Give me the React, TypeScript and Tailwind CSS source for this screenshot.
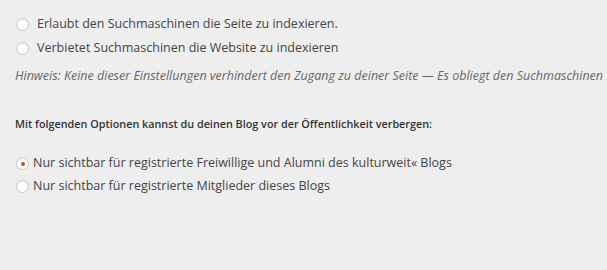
export default function App() {
    return (
        <div className="h-[270px] w-[607px] overflow-hidden bg-[#eeeeee] font-['Open_Sans',sans-serif] text-[#444]">
            <div className="flex flex-col pl-[16px] pt-[12px]">
                {/* Suchmaschinen */}
                <label className="flex h-[24px] items-center gap-[8px] whitespace-nowrap text-[12.5px]">
                    <span className="h-[13px] w-[13px] shrink-0 rounded-full border border-[#c8c8c8] bg-white shadow-[inset_0_1px_2px_rgba(0,0,0,0.08)]" />
                    Erlaubt den Suchmaschinen die Seite zu indexieren.
                </label>
                <label className="flex h-[24px] items-center gap-[8px] whitespace-nowrap text-[12.5px]">
                    <span className="h-[13px] w-[13px] shrink-0 rounded-full border border-[#c8c8c8] bg-white shadow-[inset_0_1px_2px_rgba(0,0,0,0.08)]" />
                    Verbietet Suchmaschinen die Website zu indexieren
                </label>
                <p className="mt-[7px] -ml-[1px] whitespace-nowrap text-[12.5px] leading-[17px] italic text-[#666]">
                    Hinweis: Keine dieser Einstellungen verhindert den Zugang zu deiner Seite — Es obliegt den Suchmaschinen
                </p>

                {/* Sichtbarkeit */}
                <p className="mt-[32px] -ml-[1px] whitespace-nowrap text-[10.8px] leading-[15px] font-semibold text-[#333]">
                    Mit folgenden Optionen kannst du deinen Blog vor der Öffentlichkeit verbergen:
                </p>
                <div className="mt-[21px] flex flex-col">
                    <label className="flex h-[23px] items-center gap-[4px] whitespace-nowrap text-[12.5px]">
                        <span className="flex h-[13px] w-[13px] shrink-0 items-center justify-center rounded-full border border-[#c8c8c8] bg-white shadow-[inset_0_1px_2px_rgba(0,0,0,0.08)]">
                            <span className="h-[4px] w-[4px] rounded-full bg-[#dd3d36]" />
                        </span>
                        Nur sichtbar für registrierte Freiwillige und Alumni des kulturweit« Blogs
                    </label>
                    <label className="flex h-[23px] items-center gap-[4px] whitespace-nowrap text-[12.5px]">
                        <span className="h-[13px] w-[13px] shrink-0 rounded-full border border-[#c8c8c8] bg-white shadow-[inset_0_1px_2px_rgba(0,0,0,0.08)]" />
                        Nur sichtbar für registrierte Mitglieder dieses Blogs
                    </label>
                </div>
            </div>
        </div>
    );
}
